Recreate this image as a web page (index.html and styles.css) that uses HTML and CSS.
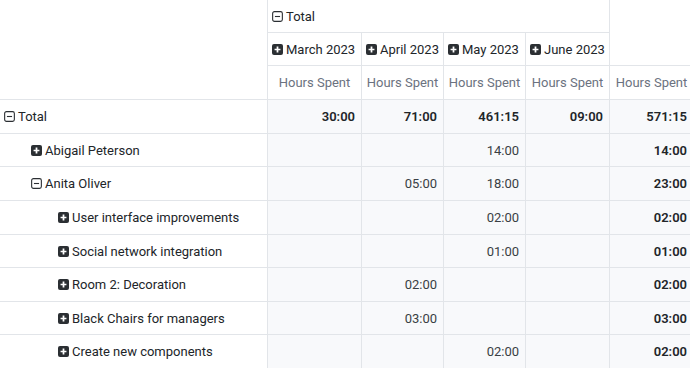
FILE: index.html
```html
<!DOCTYPE html>
<html lang="en">
<head>
<meta charset="utf-8">
<title>Pivot</title>
<link rel="stylesheet" href="styles.css">
</head>
<body>
<div class="pivot">
  <div class="cell corner"></div>
  <div class="cell hhead span4 top"><svg class="ic" viewBox="0 0 12 12"><rect x="0.7" y="0.7" width="10.6" height="10.6" rx="2" fill="none" stroke="currentColor" stroke-width="1.2"/><path d="M3.2 6h5.6" stroke="currentColor" stroke-width="1.2"/></svg>Total</div>
  <div class="cell hhead blank"></div>

  <div class="cell hhead"><svg class="ic" viewBox="0 0 12 12"><rect width="12" height="12" rx="2.2" fill="currentColor"/><path d="M6 2.8v6.4M2.8 6h6.4" stroke="#fff" stroke-width="1.9"/></svg>March 2023</div>
  <div class="cell hhead"><svg class="ic" viewBox="0 0 12 12"><rect width="12" height="12" rx="2.2" fill="currentColor"/><path d="M6 2.8v6.4M2.8 6h6.4" stroke="#fff" stroke-width="1.9"/></svg>April 2023</div>
  <div class="cell hhead"><svg class="ic" viewBox="0 0 12 12"><rect width="12" height="12" rx="2.2" fill="currentColor"/><path d="M6 2.8v6.4M2.8 6h6.4" stroke="#fff" stroke-width="1.9"/></svg>May 2023</div>
  <div class="cell hhead"><svg class="ic" viewBox="0 0 12 12"><rect width="12" height="12" rx="2.2" fill="currentColor"/><path d="M6 2.8v6.4M2.8 6h6.4" stroke="#fff" stroke-width="1.9"/></svg>June 2023</div>

  <div class="cell measure">Hours Spent</div>
  <div class="cell measure">Hours Spent</div>
  <div class="cell measure">Hours Spent</div>
  <div class="cell measure">Hours Spent</div>
  <div class="cell measure">Hours Spent</div>

  <div class="cell lbl lv0"><svg class="ic" viewBox="0 0 12 12"><rect x="0.7" y="0.7" width="10.6" height="10.6" rx="2" fill="none" stroke="currentColor" stroke-width="1.2"/><path d="M3.2 6h5.6" stroke="currentColor" stroke-width="1.2"/></svg>Total</div>
  <div class="cell val bold">30:00</div>
  <div class="cell val bold">71:00</div>
  <div class="cell val bold">461:15</div>
  <div class="cell val bold">09:00</div>
  <div class="cell val bold">571:15</div>

  <div class="cell lbl lv1"><svg class="ic" viewBox="0 0 12 12"><rect width="12" height="12" rx="2.2" fill="currentColor"/><path d="M6 2.8v6.4M2.8 6h6.4" stroke="#fff" stroke-width="1.9"/></svg>Abigail Peterson</div>
  <div class="cell val"></div>
  <div class="cell val"></div>
  <div class="cell val">14:00</div>
  <div class="cell val"></div>
  <div class="cell val bold">14:00</div>

  <div class="cell lbl lv1"><svg class="ic" viewBox="0 0 12 12"><rect x="0.7" y="0.7" width="10.6" height="10.6" rx="2" fill="none" stroke="currentColor" stroke-width="1.2"/><path d="M3.2 6h5.6" stroke="currentColor" stroke-width="1.2"/></svg>Anita Oliver</div>
  <div class="cell val"></div>
  <div class="cell val">05:00</div>
  <div class="cell val">18:00</div>
  <div class="cell val"></div>
  <div class="cell val bold">23:00</div>

  <div class="cell lbl lv2"><svg class="ic" viewBox="0 0 12 12"><rect width="12" height="12" rx="2.2" fill="currentColor"/><path d="M6 2.8v6.4M2.8 6h6.4" stroke="#fff" stroke-width="1.9"/></svg>User interface improvements</div>
  <div class="cell val"></div>
  <div class="cell val"></div>
  <div class="cell val">02:00</div>
  <div class="cell val"></div>
  <div class="cell val bold">02:00</div>

  <div class="cell lbl lv2"><svg class="ic" viewBox="0 0 12 12"><rect width="12" height="12" rx="2.2" fill="currentColor"/><path d="M6 2.8v6.4M2.8 6h6.4" stroke="#fff" stroke-width="1.9"/></svg>Social network integration</div>
  <div class="cell val"></div>
  <div class="cell val"></div>
  <div class="cell val">01:00</div>
  <div class="cell val"></div>
  <div class="cell val bold">01:00</div>

  <div class="cell lbl lv2"><svg class="ic" viewBox="0 0 12 12"><rect width="12" height="12" rx="2.2" fill="currentColor"/><path d="M6 2.8v6.4M2.8 6h6.4" stroke="#fff" stroke-width="1.9"/></svg>Room 2: Decoration</div>
  <div class="cell val"></div>
  <div class="cell val">02:00</div>
  <div class="cell val"></div>
  <div class="cell val"></div>
  <div class="cell val bold">02:00</div>

  <div class="cell lbl lv2"><svg class="ic" viewBox="0 0 12 12"><rect width="12" height="12" rx="2.2" fill="currentColor"/><path d="M6 2.8v6.4M2.8 6h6.4" stroke="#fff" stroke-width="1.9"/></svg>Black Chairs for managers</div>
  <div class="cell val"></div>
  <div class="cell val">03:00</div>
  <div class="cell val"></div>
  <div class="cell val"></div>
  <div class="cell val bold">03:00</div>

  <div class="cell lbl lv2"><svg class="ic" viewBox="0 0 12 12"><rect width="12" height="12" rx="2.2" fill="currentColor"/><path d="M6 2.8v6.4M2.8 6h6.4" stroke="#fff" stroke-width="1.9"/></svg>Create new components</div>
  <div class="cell val"></div>
  <div class="cell val"></div>
  <div class="cell val">02:00</div>
  <div class="cell val"></div>
  <div class="cell val bold">02:00</div>
</div>
</body>
</html>
```

FILE: styles.css
```css
html, body {
  margin: 0;
  padding: 0;
  background: #ffffff;
  overflow: hidden;
}

body {
  font-family: Roboto, Inter, "Noto Sans", "Liberation Sans", sans-serif;
  font-size: 13px;
  color: #212529;
}

.pivot {
  display: grid;
  grid-template-columns: 268px 94px 82px 82px 84px 84px;
  grid-template-rows: 33px 33px 34px 34px 33px 34px 34px 33px 34px 33px 34px;
  width: 694px;
}

.cell {
  box-sizing: border-box;
  display: flex;
  align-items: center;
  border-bottom: 1px solid #e2e5e9;
  white-space: nowrap;
  overflow: hidden;
}

.corner {
  grid-row: span 3;
  border-right: 1px solid #e2e5e9;
}

.hhead {
  padding-left: 4px;
  border-right: 1px solid #e2e5e9;
  background: #ffffff;
  color: #212529;
}

.span4 {
  grid-column: span 4;
}

.blank {
  grid-row: span 2;
}

.measure {
  justify-content: center;
  color: #6b7280;
  border-right: 1px solid #e2e5e9;
}

.lbl {
  padding-left: 4px;
  border-right: 1px solid #e2e5e9;
  color: #212529;
}

.lv1 {
  padding-left: 31px;
}

.lv2 {
  padding-left: 58px;
}

.val {
  justify-content: flex-end;
  padding-right: 6px;
  background: #f8f9fb;
  border-right: 1px solid #e2e5e9;
  color: #3a3f44;
}

.bold {
  font-weight: 600;
  color: #212529;
}

.ic {
  width: 11px;
  height: 11px;
  flex: none;
  margin-right: 3px;
  color: #2b2f33;
}
```
